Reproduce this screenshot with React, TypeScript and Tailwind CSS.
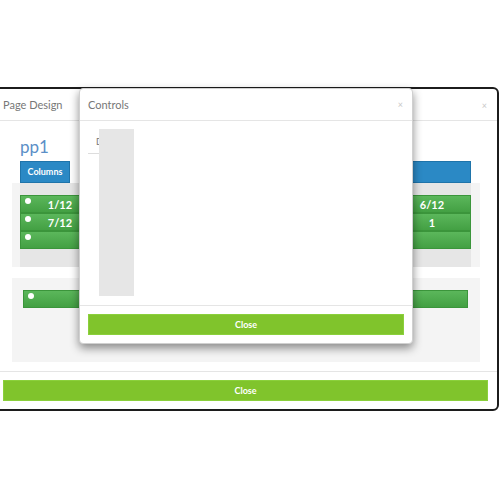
import React from "react";

const font = { fontFamily: "Lato, 'Open Sans', Arial, sans-serif" };

function Dot() {
  return <span className="absolute left-[4px] top-[2px] h-[6px] w-[6px] rounded-full bg-white" />;
}

function Row({ left, right }: { left?: string; right?: string }) {
  return (
    <div className="relative flex h-[18px] items-center justify-between border border-[#3b953b] bg-gradient-to-b from-[#5bb75b] to-[#43a043] text-[11px] font-bold text-white">
      <Dot />
      <div className="w-[76px] pl-[2px] text-center leading-none">{left}</div>
      <div className="w-[76px] text-center leading-none">{right}</div>
    </div>
  );
}

function CloseBtn() {
  return (
    <div className="flex h-[21px] items-center justify-center border border-[#8bd03c] bg-[#80c42c] text-[9px] font-bold text-white">
      Close
    </div>
  );
}

export default function App() {
  return (
    <div className="relative h-[500px] w-[500px] overflow-hidden bg-white" style={font}>
      {/* Page Design modal */}
      <div className="absolute left-[-14px] top-[87px] flex w-[513px] flex-col rounded-[6px] border-2 border-[#1c1c1c] bg-white">
        <div className="flex h-[32px] items-center justify-between border-b border-[#e5e5e5] pl-[15px] pr-[10px] pt-[2px]">
          <span className="text-[11px] text-[#777]">Page Design</span>
          <span className="text-[9px] text-[#c8c8c8]">×</span>
        </div>
        <div className="flex h-[250px] flex-col pl-[24px] pr-[17px] pt-[16px]">
          <div className="pl-[8px] text-[17px] leading-[20px] text-[#5b8fc7]">pp1</div>
          <div className="mt-[4px] flex h-[22px] justify-between pl-[8px] pr-[9px]">
            <div className="flex w-[50px] items-center justify-center border border-[#1f74aa] bg-[#2b89c5] text-[9px] font-bold text-white">
              Columns
            </div>
            <div className="w-[200px] border border-[#1f74aa] bg-[#2b89c5]" />
          </div>
          <div className="bg-[#f4f4f4] pl-[8px] pr-[9px]">
            <div className="h-[84px] bg-[#e6e6e6] pt-[12px]">
              <Row left="1/12" right="6/12" />
              <Row left="7/12" right="1" />
              <Row />
            </div>
          </div>
          <div className="mt-[11px] h-[84px] bg-[#f4f4f4] pl-[11px] pr-[12px] pt-[12px]">
            <div className="relative h-[18px] border border-[#3b953b] bg-gradient-to-b from-[#5bb75b] to-[#43a043]">
              <Dot />
            </div>
          </div>
        </div>
        <div className="border-t border-[#e5e5e5] pb-[8px] pl-[15px] pr-[9px] pt-[8px]">
          <CloseBtn />
        </div>
      </div>

      {/* Controls modal */}
      <div className="absolute left-[79px] top-[88px] flex w-[334px] flex-col rounded-[4px] border border-[#d0d0d0] bg-white shadow-[0_4px_10px_rgba(0,0,0,0.45)]">
        <div className="flex h-[32px] items-center justify-between border-b border-[#e5e5e5] pl-[8px] pr-[9px] pt-[1px]">
          <span className="text-[11px] text-[#777]">Controls</span>
          <span className="text-[9px] text-[#c8c8c8]">×</span>
        </div>
        <div className="relative h-[184px] pl-[8px] pt-[14px]">
          <div className="w-[40px] border-b border-[#ddd] pb-[4px] pl-[8px] text-[9px] text-[#777]">Design</div>
          <div className="absolute left-[19px] top-[8px] h-[167px] w-[35px] bg-[#e6e6e6]" />
        </div>
        <div className="border-t border-[#e5e5e5] pb-[8px] pl-[8px] pr-[8px] pt-[8px]">
          <CloseBtn />
        </div>
      </div>
    </div>
  );
}
